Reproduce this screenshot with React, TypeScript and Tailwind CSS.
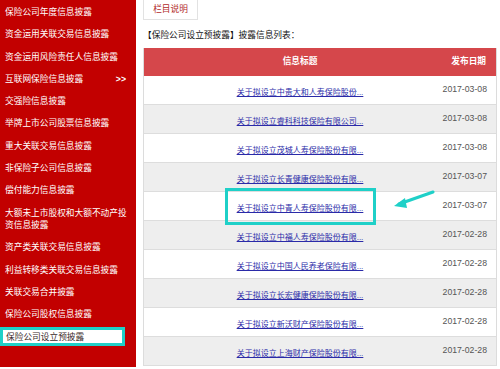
import React from 'react';

const menu = [
  '保险公司年度信息披露',
  '资金运用关联交易信息披露',
  '资金运用风险责任人信息披露',
  '互联网保险信息披露',
  '交强险信息披露',
  '举牌上市公司股票信息披露',
  '重大关联交易信息披露',
  '非保险子公司信息披露',
  '偿付能力信息披露',
  '大额未上市股权和大额不动产投资信息披露',
  '资产类关联交易信息披露',
  '利益转移类关联交易信息披露',
  '关联交易合并披露',
  '保险公司股权信息披露',
];

const rows = [
  ['关于拟设立中贵大和人寿保险股份...', '2017-03-08'],
  ['关于拟设立睿科科技保险有限公司...', '2017-03-08'],
  ['关于拟设立茂城人寿保险股份有限...', '2017-03-08'],
  ['关于拟设立长青健康保险股份有限...', '2017-03-07'],
  ['关于拟设立中青人寿保险股份有限...', '2017-03-07'],
  ['关于拟设立中福人寿保险股份有限...', '2017-02-28'],
  ['关于拟设立中国人民养老保险有限...', '2017-02-28'],
  ['关于拟设立长宏健康保险股份有限...', '2017-02-28'],
  ['关于拟设立新沃财产保险股份有限...', '2017-02-28'],
  ['关于拟设立上海财产保险股份有限...', '2017-02-28'],
];

const App = () => {
  return (
    <div
      className="relative flex w-[500px] h-[369px] overflow-hidden bg-white"
      style={{ fontFamily: '"Liberation Sans", "Noto Sans CJK SC", sans-serif' }}
    >
      {/* sidebar */}
      <aside className="w-[136px] h-[367px] bg-[#c20000] pt-[1px] text-[8.7px] leading-[12.3px] text-white">
        {menu.map((m, i) => (
          <div key={i} className="relative py-[5px] pl-[5px] pr-[8px]">
            {m}
            {i === 3 && (
              <span className="absolute right-[10px] top-[5px] font-bold">&gt;&gt;</span>
            )}
          </div>
        ))}
        <div className="mt-[2px] w-[125px] h-[19px] flex items-center pl-[3px] bg-white border-[3px] border-[#1fd0c8] text-[#3a2a2a]">
          保险公司设立预披露
        </div>
      </aside>

      {/* content */}
      <main className="ml-[7px] w-[354px] flex flex-col">
        <div className="w-[55px] h-[20px] flex items-center justify-center border border-t-0 border-[#e2e2e2] text-[8.7px] text-[#b22a2a]">
          栏目说明
        </div>
        <div className="mt-[9px] h-[13px] leading-[13px] text-[8.7px] text-[#111]">
          【保险公司设立预披露】披露信息列表：
        </div>
        <div className="mt-[6px] border-l border-r border-[#dcdcdc]">
          <div className="flex h-[28px] items-center bg-[#d5474b] text-white text-[8.7px] font-bold">
            <div className="flex-1 pl-[30px] text-center">信息标题</div>
            <div className="w-[70px] pr-[10px] text-right">发布日期</div>
          </div>
          {rows.map(([t, d], i) => (
            <div
              key={i}
              className={`flex h-[29px] items-center border-b border-[#dddddd] ${
                i % 2 === 1 ? 'bg-[#eeeeee]' : 'bg-white'
              }`}
            >
              <div className="flex-1 pl-[30px] text-center">
                <a className="text-[8px] text-[#2a2aa8] underline">{t}</a>
              </div>
              <div className="w-[70px] pr-[9px] text-right text-[8.7px] text-[#555]">{d}</div>
            </div>
          ))}
        </div>
      </main>

      {/* annotation box */}
      <div className="absolute left-[225px] top-[188px] w-[151px] h-[37px] border-[3px] border-[#1fd0c8]" />
      {/* annotation arrow */}
      <svg className="absolute left-[390px] top-[186px]" width="48" height="26" viewBox="0 0 48 26">
        <line x1="43" y1="6" x2="9" y2="18" stroke="#1fd0c8" strokeWidth="3" strokeLinecap="round" />
        <polygon points="4,20 15,12 17,22" fill="#1fd0c8" />
      </svg>
    </div>
  );
};

export default App;
